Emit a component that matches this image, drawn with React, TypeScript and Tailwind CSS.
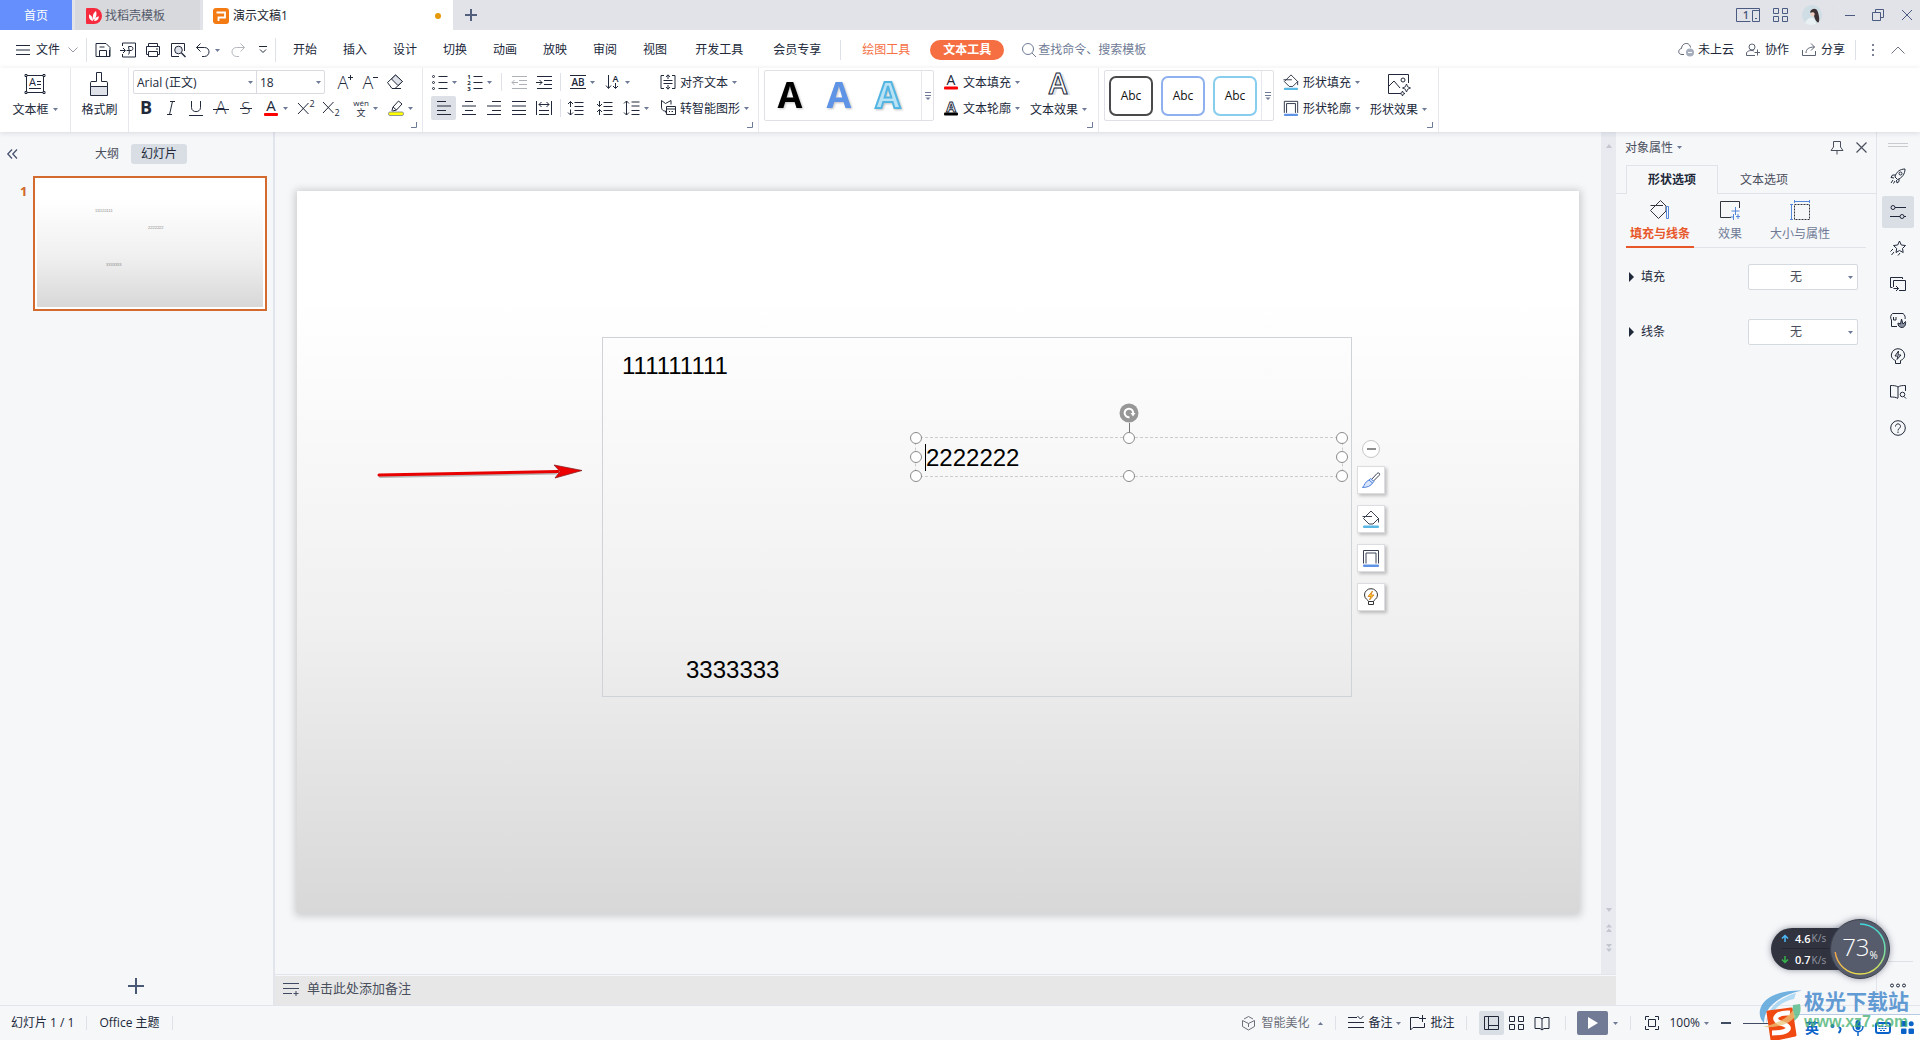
import React from "react";

const FONT = "font-['Open_Sans','Noto_Sans_CJK_SC',sans-serif]";

type IconProps = { w?: number; h?: number; className?: string; children: React.ReactNode };

function Icon({ w = 16, h = 16, className = "", children }: IconProps) {
  return (
    <svg
      width={w}
      height={h}
      viewBox={`0 0 ${w} ${h}`}
      fill="none"
      stroke="currentColor"
      strokeWidth="1"
      className={`shrink-0 overflow-visible ${className}`}
      aria-hidden="true"
    >
      {children}
    </svg>
  );
}

function Glyph({ x, y, size, weight = 400, family = "Open Sans", fill = "currentColor", children }: {
  x: number; y: number; size: number; weight?: number; family?: string; fill?: string; children: string;
}) {
  return (
    <text x={x} y={y} fontSize={size} fontWeight={weight} fontFamily={`${family}, 'Noto Sans CJK SC', sans-serif`} fill={fill} stroke="none" textAnchor="middle">
      {children}
    </text>
  );
}

const Caret = ({ up = false }: { up?: boolean }) => (
  <svg width="5" height="3" viewBox="0 0 5 3" className="shrink-0 fill-[#6f7b96]" aria-hidden="true">
    <path d={up ? "M0 3H5L2.5 0Z" : "M0 0H5L2.5 3Z"} />
  </svg>
);

const Sep = ({ className = "h-[18px]" }: { className?: string }) => <span className={`w-px shrink-0 bg-[#dfe1e8] ${className}`} />;

function Slot({ label, children, className = "w-[25px]" }: { label: string; children: React.ReactNode; className?: string }) {
  return (
    <button type="button" aria-label={label} className={`flex h-6 shrink-0 items-center justify-center ${className}`}>
      {children}
    </button>
  );
}

function DropSlot({ label, children }: { label: string; children: React.ReactNode }) {
  return (
    <button type="button" aria-label={label} className="flex h-6 w-[35px] shrink-0 items-center gap-1 pl-[5px]">
      {children}
      <Caret />
    </button>
  );
}

function LabelButton({ icon, children }: { icon: React.ReactNode; children: string }) {
  return (
    <button type="button" className="flex h-6 items-center gap-1 px-[5px] whitespace-nowrap">
      {icon}
      <span className="pt-0.5">{children}</span>
      <Caret />
    </button>
  );
}

function BigButton({ icon, children, drop = true }: { icon: React.ReactNode; children: string; drop?: boolean }) {
  return (
    <button type="button" className="flex h-[50px] flex-col items-center px-[5px]">
      <span className="flex h-[28px] w-full items-center justify-center">{icon}</span>
      <span className="flex h-[22px] items-center gap-1 pt-px whitespace-nowrap">
        {children}
        {drop && <Caret />}
      </span>
    </button>
  );
}

const Corner = () => (
  <Icon w={6} h={6} className="absolute right-[5px] bottom-1 text-[#6f7b96]">
    <path d="M5.5 0V5.5H0" />
  </Icon>
);

function Group({ children, corner = true, className = "" }: { children: React.ReactNode; corner?: boolean; className?: string }) {
  return (
    <div className={`relative flex shrink-0 border-r border-[#e6e8ee] pt-[2px] ${className}`}>
      {children}
      {corner && <Corner />}
    </div>
  );
}

/* ---------- icons ---------- */

const SaveIcon = () => (
  <Icon><path d="M1 1.5H11L15 5.5V14.5H1ZM4.5 14.5V8.5H11.5V14.5M4.5 5H9.5M14.5 8V14" strokeLinejoin="round" /></Icon>
);
const ExportIcon = () => (
  <Icon><path d="M2.5 4V1H15.5V15H2.5V12M0 8.5H5M3 6L5.5 8.5L3 11M8.5 12.5C10 11 9 8 8.5 4.5H11C13.5 4.5 13.5 8.5 11 8.5H6.5" /></Icon>
);
const PrintIcon = () => (
  <Icon><path d="M3.5 4.5V1.5H12.5V4.5M3.5 12.5H1.5V4.5H14.5V12.5H12.5M3.5 9.5H12.5V14.5H3.5ZM11 7H13" strokeLinejoin="round" /></Icon>
);
const PreviewIcon = () => (
  <Icon><path d="M14.5 9V1.5H1.5V14.5H9" /><circle cx="8.5" cy="8" r="3.8" fill="#dfe2e8" /><path d="M11.5 11L15.5 15" strokeWidth="1.5" /></Icon>
);
const UndoIcon = ({ flip = false }: { flip?: boolean }) => (
  <Icon className={flip ? "-scale-x-100" : ""}><path d="M5.5 1.5L1.5 5.5L5.5 9.5M1.5 5.5H9.5C15.5 5.5 15.5 14 9.5 14.5H7" /></Icon>
);
const TextBoxIcon = () => (
  <Icon w={24} h={22}>
    <path d="M3.5 2.5H20.5V19.5H3.5ZM14 8.5H18M14 11.5H18M6 15.5H18" />
    <path d="M2 1.5H4V3.5H2ZM20 1.5H22V3.5H20ZM2 18.5H4V20.5H2ZM20 18.5H22V20.5H20Z" fill="#fff" />
    <Glyph x={9.5} y={13} size={11}>A</Glyph>
  </Icon>
);
const PainterIcon = () => (
  <Icon w={20} h={26}><path d="M1.5 15.5H18.5V24.5H1.5Z" fill="#dfe2e8" /><path d="M1.5 15.5V11.5Q1.5 10.5 3 10.5H7.5V1.5H12.5V10.5H17Q18.5 10.5 18.5 11.5V15.5" /></Icon>
);
const EraserIcon = () => (
  <Icon><path d="M.5 8.5L8.5 1L15.5 7.5L8 14.5H5Z" strokeLinejoin="round" /><path d="M4.5 5L8.5 1L15.5 7.5L11 11.500Z" fill="#dfe2e8" /><path d="M5 14.5H14" /></Icon>
);
const BulletIcon = () => (
  <Icon><path d="M6.5 2.5H15.5M6.5 8.5H15.5M6.5 14.5H15.5" /><circle cx="1.5" cy="2.5" r="1" /><circle cx="1.5" cy="8.5" r="1" /><circle cx="1.5" cy="14.5" r="1" /></Icon>
);
const NumberIcon = () => (
  <Icon><path d="M6.5 2.5H15.5M6.5 8.5H15.5M6.5 14.5H15.5" /><Glyph x={2} y={5} size={6} weight={700}>1</Glyph><Glyph x={2} y={11} size={6} weight={700}>2</Glyph><Glyph x={2} y={17} size={6} weight={700}>3</Glyph></Icon>
);
const IndentIcon = ({ out = false }: { out?: boolean }) => (
  <Icon className={out ? "text-[#aeb1b8]" : ""}>
    <path d="M1 2.5H16M8 6.5H16M8 10.5H16M1 14.5H16" />
    <path d={out ? "M7 8.5H1M3.5 6L1 8.5L3.5 11" : "M0 8.5H6M3.5 6L6 8.5L3.5 11"} />
  </Icon>
);
const CaseIcon = () => <Icon><path d="M0 1.5H16M0 14.5H16" /><Glyph x={8} y={12} size={10} weight={600}>AB</Glyph></Icon>;
const DirectionIcon = () => <Icon><path d="M3.5 1V14M1 11.5L3.5 14.5L6 11.5M10.5 9V14M8 12L10.5 14.5L13 12" /><Glyph x={10.500} y={8} size={9} weight={600}>A</Glyph></Icon>;
const AlignIcon = ({ d }: { d: string }) => <Icon><path d={d} /></Icon>;
const DistributeIcon = () => <Icon><path d="M.5 1V15M15.5 1V15M3 10.5H13M3 14.5H13M3 4.5H13M5.5 2L3 4.5L5.5 7M10.5 2L13 4.5L10.5 7" /></Icon>;
const SpacingIcon = ({ kind }: { kind: "out" | "in" | "both" }) => (
  <Icon>
    <path d={kind === "both" ? "M7.5 2H15.5M7.5 6H15.5M7.5 10.5H15.5M7.5 14.5H15.5" : "M6.5 2.5H15.5M6.5 6.5H15.5M6.5 10.5H15.5M6.5 14.5H15.5"} />
    {kind === "out" && <path d="M2.5 7V1.5M0 4L2.5 1.5L5 4M2.5 9.5V15M0 12.5L2.5 15L5 12.5" />}
    {kind === "in" && <path d="M2.5 1V6.5M0 4L2.5 6.5L5 4M2.5 15V9.5M0 12L2.5 9.5L5 12" />}
    {kind === "both" && <path d="M2.5 1V15M0 3.5L2.5 1L5 3.5M0 12.5L2.5 15L5 12.5" />}
  </Icon>
);
const AlignTextIcon = () => <Icon><path d="M4 1.5H1V14.5H4M12 1.5H15V14.5H12M3.5 6.5H12.5M3.5 9.5H12.5M8 1V5M6 3L8 .8L10 3M8 11V15M6 13L8 15.2L10 13" /></Icon>;
const SmartIcon = () => <Icon><path d="M5.5 12.5V11C2 11 1.5 9 1.5 6V.5L5.5 3.5L11 .5V4.5M6.5 6.5H15.5V14.500H6.5ZM6.5 9H15.5M9 11.5H10M11.5 11.500H13" /></Icon>;
const TextColorIcon = ({ bar, outline = false }: { bar: string; outline?: boolean }) => (
  <Icon>
    {outline ? (
      <text x="8" y="11.5" fontSize="14" fontWeight="700" fontFamily="Open Sans" textAnchor="middle" fill="#fff" strokeWidth=".9">A</text>
    ) : (
      <Glyph x={8} y={11} size={14}>A</Glyph>
    )}
    <rect x="1" y="12.500" width="14" height="3" rx="1" fill={bar} stroke="none" />
  </Icon>
);
const HighlightIcon = () => <Icon><rect x=".5" y="12" width="15" height="3.5" rx="1.500" fill="#ff0" stroke="#77808f" strokeWidth=".8" /><path d="M4 10.5L5 7L10.5 1L14 4L8.5 10L4.5 11ZM5 7L8.5 10" strokeLinejoin="round" /></Icon>;
const BucketIcon = ({ size = 16 }: { size?: number }) => (
  <svg width={size} height={size} viewBox="0 0 18 18" fill="none" stroke="currentColor" className="shrink-0" aria-hidden="true">
    <path d="M7 14L1.500 8.500L9 1L16.500 8.500L11 14ZM.500 6.500H10M16.500 8V12.500" />
    <rect x="1" y="15.500" width="16" height="2.500" rx="1" fill="#5ab8e4" stroke="none" />
  </svg>
);
const FrameIcon = ({ size = 16 }: { size?: number }) => (
  <svg width={size} height={size} viewBox="0 0 18 18" fill="none" stroke="currentColor" className="shrink-0" aria-hidden="true">
    <path d="M1.500 14.500V1.500H16.500V14.500M4 14.500V4H14V14.500" />
    <rect x="1" y="15.500" width="16" height="2.500" rx="1" fill="#5f93e6" stroke="none" />
  </svg>
);
const TextEffectIcon = () => (
  <Icon w={26} h={26}>
    <text x="15" y="24" fontSize="28" fontWeight="600" fontFamily="Open Sans" textAnchor="middle" fill="#e3e5e9" stroke="none">A</text>
    <text x="12" y="23" fontSize="28" fontWeight="600" fontFamily="Open Sans" textAnchor="middle" fill="#fff">A</text>
  </Icon>
);
const ShapeEffectIcon = () => (
  <Icon w={24} h={24}><path d="M21.5 11V2.5H1.5V21.5H13M2 14L7 9L13 16" /><circle cx="16" cy="8" r="2" /><path d="M19.5 12L20.7 14.8L23.5 16L20.7 17.2L19.5 20L18.3 17.2L15.5 16L18.3 14.8ZM15.5 19L16.2 20.8L18 21.5L16.2 22.2L15.5 24L14.8 22.2L13 21.5L14.8 20.8Z" strokeWidth=".9" /></Icon>
);
const More = () => <Icon w={6} h={8} className="text-[#6f7b96]"><path d="M0 .5H6M0 3.5H6" /><path d="M.5 5.5H5.5L3 8Z" fill="currentColor" stroke="none" /></Icon>;

/* ---------- title bar ---------- */

function TitleBar() {
  return (
    <header className="flex h-[30px] shrink-0 items-stretch bg-[#e2e3e8]">
      <button type="button" className="w-[72px] bg-[#648ffc] pt-0.5 text-white">首页</button>
      <button type="button" className="ml-[3px] flex w-[125px] items-center gap-[3px] bg-[#d8d9dc] pt-0.5 pl-[11px] text-[#555b6b]">
        <Icon>
          <path d="M1 0H8A8 8 0 0 1 8 16H1Q0 16 0 15V1Q0 0 1 0Z" fill="#f62b3d" stroke="none" />
          <path d="M7 13C2.5 12 3 8 3 6.5C5 7 7 9 7 13ZM7.5 12C6 8 7.5 4.5 10 3C11 6 10.5 10 7.5 12ZM8 13C8.5 10.5 10.5 8.5 13 8.5C12.5 11.5 11 13 8 13Z" fill="#fff" stroke="none" />
        </Icon>
        找稻壳模板
      </button>
      <button type="button" className="ml-[3px] flex w-[250px] items-center gap-1 bg-white pt-0.5 pr-3 pl-[10px] text-[#20242e]">
        <Icon>
          <rect width="16" height="16" rx="3" fill="#f47a14" stroke="none" />
          <path d="M3.5 4.5H12V9.5H5.5V13" stroke="#fff" strokeWidth="1.800" />
        </Icon>
        <span>演示文稿1</span>
        <span className="ml-auto size-1.5 rounded-full bg-[#e59a0c]" />
      </button>
      <button type="button" aria-label="新建标签" className="flex w-9 items-center justify-center text-[#53607d]">
        <Icon w={12} h={12}><path d="M6 0V12M0 6H12" strokeWidth="2" /></Icon>
      </button>
      <div className="ml-auto flex items-center pr-2 text-[#4a5a80]">
        <button type="button" aria-label="窗口布局" className="flex w-[37px]">
          <Icon w={24} h={14}><path d="M14.5 13.5H.5V.5H23.5V13.5H16.5V2.5H23.5M19 10.5H21" /><Glyph x={10} y={11} size={11} weight={600}>1</Glyph></Icon>
        </button>
        <button type="button" aria-label="应用" className="flex w-[29px]">
          <Icon w={15} h={14}><path d="M.5 .5H5.5V5.5H.5ZM9.5 .5H14.5V5.5H9.5ZM.5 8.5H5.5V13.5H.5ZM9.5 8.5H14.5V13.5H9.5Z" /></Icon>
        </button>
        <button type="button" aria-label="账户" className="flex w-[30px]">
          <Icon w={20} h={20}>
            <circle cx="10" cy="10" r="10" fill="#cfdde4" stroke="none" />
            <path d="M8 7C10 3 14 3 15.500 6C17 10 18 15 16.500 17.500C14 17 13 14 12 11Z" fill="#3a3034" stroke="none" />
            <path d="M8.500 8.500C9.500 6.500 12 7 12.500 8.500C13 10 12 11.500 11 11.500C9.500 11.500 8.500 10 8.500 8.500Z" fill="#f0cfc2" stroke="none" />
            <path d="M3 17.500C5 14 8 12 11 13C13 15 14 17 14 19C10 20.5 6 20.5 3 17.500Z" fill="#e9f0f3" stroke="none" />
          </Icon>
        </button>
        <Sep className="h-5 bg-[#c6c9d2]" />
        <button type="button" aria-label="最小化" className="ml-3 flex w-[27px]"><Icon w={10} h={12}><path d="M0 6.5H10" /></Icon></button>
        <button type="button" aria-label="还原" className="flex w-[30px]"><Icon w={12} h={12}><path d="M3.5 3.5V.5H11.5V8.5H8.5M.5 3.5H8.5V11.5H.5Z" /></Icon></button>
        <button type="button" aria-label="关闭" className="flex"><Icon w={10} h={10}><path d="M0 0L10 10M10 0L0 10" /></Icon></button>
      </div>
    </header>
  );
}

/* ---------- menu row ---------- */

const TABS = ["开始", "插入", "设计", "切换", "动画", "放映", "审阅", "视图"];

function MenuRow() {
  return (
    <nav className="flex h-[38px] shrink-0 items-center bg-white pt-0.5">
      <button type="button" className="flex w-[86px] shrink-0 items-center gap-1.5 pl-4">
        <Icon w={14} h={10}><path d="M0 .5H14M0 5H14M0 9.5H14" /></Icon>
        <span className="shrink-0">文件</span>
        <Icon w={10} h={6} className="ml-0.5 text-[#9a9da6]"><path d="M.5 .5L5 5L9.5 .5" /></Icon>
      </button>
      <Sep className="mr-[3px] h-6" />
      <Slot label="保存"><SaveIcon /></Slot>
      <Slot label="输出为PDF"><ExportIcon /></Slot>
      <Slot label="打印"><PrintIcon /></Slot>
      <Slot label="打印预览"><PreviewIcon /></Slot>
      <DropSlot label="撤消"><UndoIcon /></DropSlot>
      <Slot label="恢复" className="w-[25px] text-[#b3b6bd]"><UndoIcon flip /></Slot>
      <Slot label="自定义快速访问工具栏"><Icon w={8} h={8}><path d="M0 .5H8M1 3.5L4 6.5L7 3.5" /></Icon></Slot>
      <Sep className="mr-1 h-6" />
      {TABS.map((t) => (
        <button key={t} type="button" className="shrink-0 px-[13px]">{t}</button>
      ))}
      <button type="button" className="shrink-0 px-[15px]">开发工具</button>
      <button type="button" className="shrink-0 px-[15px]">会员专享</button>
      <Sep className="mx-1 h-5" />
      <button type="button" className="ml-1 shrink-0 px-[13px] text-[#f56f43]">绘图工具</button>
      <button type="button" className="ml-[7px] h-5 shrink-0 rounded-full bg-[#f66f43] px-[13px] font-bold text-white">文本工具</button>
      <label className="ml-[18px] flex items-center gap-0.5 text-[#6f7b96]">
        <Icon w={14} h={14}><circle cx="6" cy="6" r="5.500" /><path d="M10 10L14 14" /></Icon>
        <input type="text" aria-label="查找命令、搜索模板" placeholder="查找命令、搜索模板" className="w-[130px] bg-transparent outline-none placeholder:text-[#6f7b96]" />
      </label>
      <div className="ml-auto flex shrink-0 items-center pr-[15px]">
        <button type="button" className="flex items-center gap-1">
          <Icon><path d="M6 12.5H4C-.5 12.5 0 7 3.5 6.5C4 0 12 0 12.5 5.5" stroke="#5b6272" /><circle cx="12" cy="10.5" r="4" fill="#a6adbd" stroke="none" /><path d="M10 10.5H14" stroke="#fff" /></Icon>
          未上云
        </button>
        <button type="button" className="ml-3 flex items-center gap-[5px]">
          <Icon w={14} h={14}><circle cx="6" cy="4" r="3" stroke="#5b6272" /><path d="M9 12.5H.5V10C1 7.5 6 7 8 8M8.5 9.5H14M11.5 6.5V12.5" stroke="#5b6272" /></Icon>
          协作
        </button>
        <button type="button" className="ml-[13px] flex items-center gap-[5px]">
          <Icon w={14} h={14}><path d="M.5 7V12.5H13.5V8M4 10C4 6 7 4 12.5 4M9 .5L12.5 4L9 7.5" stroke="#5b6272" /></Icon>
          分享
        </button>
        <Sep className="ml-[10px] h-5" />
        <button type="button" aria-label="更多" className="ml-4 flex text-[#7a8194]">
          <Icon w={3} h={12}><path d="M0 1H2M0 6H2M0 11H2" strokeWidth="2" /></Icon>
        </button>
        <button type="button" aria-label="折叠功能区" className="ml-4 flex text-[#6f7583]">
          <Icon w={14} h={8}><path d="M.5 7.5L7 1L13.5 7.5" /></Icon>
        </button>
      </div>
    </nav>
  );
}

/* ---------- ribbon ---------- */

const WORDART = [
  { fill: "#000000", stroke: "none" },
  { fill: "#5f93e6", stroke: "none" },
  { fill: "#b9e2f5", stroke: "#52b5e2" },
];
const SHAPES = ["border-[#4a4a4c]", "border-[#8fb0ee]", "border-[#86cdee]"];

function Gallery({ children }: { children: React.ReactNode }) {
  return (
    <div className="ml-[5px] flex h-[51px] w-[170px] rounded-[2px] border border-[#dfe1e6]">
      <div className="flex flex-1 items-center">{children}</div>
      <button type="button" aria-label="更多样式" className="flex w-3 items-center justify-center border-l border-[#e6e8ee]"><More /></button>
    </div>
  );
}

function Ribbon() {
  return (
    <section aria-label="文本工具" className="relative z-10 flex h-16 shrink-0 bg-white shadow-[0_1px_5px_rgba(60,70,90,0.16)]">
      <Group corner={false} className="w-[71px] justify-center">
        <BigButton icon={<TextBoxIcon />}>文本框</BigButton>
      </Group>
      <Group corner={false} className="w-[58px] justify-center">
        <BigButton icon={<PainterIcon />} drop={false}>格式刷</BigButton>
      </Group>

      <Group className="w-[294px] flex-col gap-0.5 pl-1">
        <div className="flex h-6 items-center">
          <div className="flex h-6 rounded-[2px] border border-[#d9dbe1]">
            <label className="relative flex w-[123px] items-center border-r border-[#d9dbe1]">
              <select aria-label="字体" className="h-full w-full appearance-none bg-transparent pt-px pl-[3px] outline-none"><option>Arial (正文)</option></select>
              <span className="pointer-events-none absolute right-[3px]"><Caret /></span>
            </label>
            <label className="relative flex w-[67px] items-center">
              <select aria-label="字号" className="h-full w-full appearance-none bg-transparent pt-px pl-[3px] outline-none"><option>18</option></select>
              <span className="pointer-events-none absolute right-[3px]"><Caret /></span>
            </label>
          </div>
          <span className="w-[7px]" />
          <Slot label="增大字号"><Icon><Glyph x={6} y={15} size={18} weight={300}>A</Glyph><path d="M11 3.5H16M13.5 1V6" /></Icon></Slot>
          <Slot label="减小字号"><Icon><Glyph x={6} y={15} size={18} weight={300}>A</Glyph><path d="M11 3.5H16" /></Icon></Slot>
          <Slot label="清除格式"><EraserIcon /></Slot>
        </div>
        <div className="flex h-6 items-center">
          <Slot label="加粗"><Icon><Glyph x={8} y={14} size={18} weight={700}>B</Glyph></Icon></Slot>
          <Slot label="倾斜"><Icon><path d="M7 1.5H12M4 14.5H9M9.5 1.5L6.5 14.5" /></Icon></Slot>
          <Slot label="下划线"><Icon><path d="M3.5 1V7.5C3.5 13 12.5 13 12.5 7.5V1M1 15.5H15" /></Icon></Slot>
          <Slot label="字符边框"><Icon><Glyph x={8} y={14} size={18} weight={300}>A</Glyph><path d="M0 9.5H16" /></Icon></Slot>
          <Slot label="删除线"><Icon><Glyph x={8} y={14} size={17} weight={300}>S</Glyph><path d="M2 8.5H14" /></Icon></Slot>
          <DropSlot label="字体颜色">
            <Icon><Glyph x={8} y={11} size={15}>A</Glyph><rect x="1" y="13" width="14" height="3" rx="1" fill="#fe0000" stroke="none" /></Icon>
          </DropSlot>
          <Slot label="上标"><Icon><path d="M0 3L10.5 14M10.5 3L0 14" /><Glyph x={14} y={7} size={9}>2</Glyph></Icon></Slot>
          <Slot label="下标"><Icon><path d="M0 2L10.5 13M10.5 2L0 13" /><Glyph x={14} y={16} size={9}>2</Glyph></Icon></Slot>
          <span className="w-[5px]" />
          <DropSlot label="拼音指南"><Icon><Glyph x={8} y={6} size={8}>wén</Glyph><Glyph x={8} y={15.5} size={9} family="Noto Sans CJK SC">文</Glyph></Icon></DropSlot>
          <DropSlot label="突出显示"><HighlightIcon /></DropSlot>
        </div>
      </Group>

      <Group className="w-[336px]">
        <div className="flex w-[232px] flex-col gap-0.5">
          <div className="flex h-6 items-center pl-1">
            <DropSlot label="项目符号"><BulletIcon /></DropSlot>
            <DropSlot label="编号"><NumberIcon /></DropSlot>
            <Sep className="mx-1 h-[18px]" />
            <Slot label="减少缩进"><IndentIcon out /></Slot>
            <Slot label="增加缩进"><IndentIcon /></Slot>
            <Sep className="mx-1 h-[18px]" />
            <DropSlot label="更改大小写"><CaseIcon /></DropSlot>
            <DropSlot label="文字方向"><DirectionIcon /></DropSlot>
          </div>
          <div className="flex h-6 items-center pl-2">
            <Slot label="左对齐" className="w-[25px] rounded-[2px] bg-[#dde1e7]"><AlignIcon d="M1 1.5H10M1 6H15M1 10.5H10M1 14.5H15" /></Slot>
            <Slot label="居中对齐"><AlignIcon d="M4 1.5H12M1 6H15M4 10.5H12M1 14.5H15" /></Slot>
            <Slot label="右对齐"><AlignIcon d="M6 1.5H15M1 6H15M6 10.5H15M1 14.5H15" /></Slot>
            <Slot label="两端对齐"><AlignIcon d="M1 1.5H15M1 6H15M1 10.5H15M1 14.5H15" /></Slot>
            <Slot label="分散对齐"><DistributeIcon /></Slot>
            <Sep className="ml-1 h-[18px]" />
            <Slot label="增大段落间距" className="w-[29px]"><SpacingIcon kind="out" /></Slot>
            <Slot label="减小段落间距" className="w-[29px]"><SpacingIcon kind="in" /></Slot>
            <DropSlot label="行距"><SpacingIcon kind="both" /></DropSlot>
          </div>
        </div>
        <div className="flex flex-col items-start gap-0.5">
          <LabelButton icon={<AlignTextIcon />}>对齐文本</LabelButton>
          <LabelButton icon={<SmartIcon />}>转智能图形</LabelButton>
        </div>
      </Group>

      <Group className="w-[340px]">
        <Gallery>
          {WORDART.map((a) => (
            <button key={a.fill} type="button" aria-label="艺术字样式" className="flex w-[49px] justify-center">
              <svg width="34" height="34" viewBox="0 0 34 34" className="overflow-visible drop-shadow-[1px_1px_1px_rgba(0,0,0,0.25)]" aria-hidden="true">
                <text x="17" y="29" fontSize="36" fontWeight="700" fontFamily="Open Sans" textAnchor="middle" fill={a.fill} stroke={a.stroke} strokeWidth="2">A</text>
              </svg>
            </button>
          ))}
        </Gallery>
        <div className="ml-1 flex flex-col items-start gap-0.5">
          <LabelButton icon={<TextColorIcon bar="#fe0000" />}>文本填充</LabelButton>
          <LabelButton icon={<TextColorIcon bar="#000" outline />}>文本轮廓</LabelButton>
        </div>
        <BigButton icon={<TextEffectIcon />}>文本效果</BigButton>
      </Group>

      <Group className="w-[340px]">
        <Gallery>
          <div className="flex gap-2 pl-1">
            {SHAPES.map((s) => (
              <button key={s} type="button" className={`h-10 w-11 rounded-[7px] border-2 bg-white text-[#111] ${s}`}>Abc</button>
            ))}
          </div>
        </Gallery>
        <div className="ml-1 flex flex-col items-start gap-0.5">
          <LabelButton icon={<BucketIcon />}>形状填充</LabelButton>
          <LabelButton icon={<FrameIcon />}>形状轮廓</LabelButton>
        </div>
        <BigButton icon={<ShapeEffectIcon />}>形状效果</BigButton>
      </Group>
    </section>
  );
}

/* ---------- slide list ---------- */

function SlidePanel() {
  return (
    <aside className="flex w-[275px] shrink-0 flex-col border-r-2 border-[#e3e5ed]">
      <div className="flex h-11 items-center pl-[7px]">
        <button type="button" aria-label="收起" className="flex w-[88px] text-[#4a5470]">
          <Icon w={11} h={10}><path d="M5 .5L.8 5L5 9.5M10 .5L5.8 5L10 9.5" strokeWidth="1.300" /></Icon>
        </button>
        <button type="button" className="text-[#4a4f5d]">大纲</button>
        <button type="button" className="ml-3 h-5 w-14 rounded-[3px] bg-[#d9dee5]">幻灯片</button>
      </div>
      <ol className="flex-1 pl-5">
        <li className="flex">
          <span className="w-[13px] pt-[7px] font-['Noto_Sans'] text-[13px] leading-4 font-bold text-[#d0662a]">1</span>
          <button type="button" aria-label="幻灯片 1" className="relative h-[135px] w-[234px] border-2 border-[#d36b2e] bg-white p-[2px]">
            <span className="relative block size-full bg-linear-to-b from-white from-15% via-[#f0f0f0] via-60% to-[#d8d8d8] text-left font-['Liberation_Sans'] text-[4px] leading-[4px] text-[#8a8a8a]">
              <span className="absolute top-[29px] left-[58px]">111111111</span>
              <span className="absolute top-[46px] left-[111px]">2222222</span>
              <span className="absolute top-[83px] left-[69px]">3333333</span>
            </span>
          </button>
        </li>
      </ol>
      <button type="button" aria-label="新建幻灯片" className="flex h-9 w-[271px] shrink-0 items-center justify-center pb-0.5 text-[#4a5878]">
        <Icon w={16} h={16}><path d="M8 0V16M0 8H16" strokeWidth="2" /></Icon>
      </button>
    </aside>
  );
}

/* ---------- canvas ---------- */

const HANDLES = [
  "top-0 left-0", "top-1/2 left-0", "top-full left-0", "top-0 left-1/2",
  "top-full left-1/2", "top-0 left-full", "top-1/2 left-full", "top-full left-full",
];

function FloatButton({ label, children }: { label: string; children: React.ReactNode }) {
  return (
    <button type="button" aria-label={label} className="flex size-7 items-center justify-center border border-[#dcdde0] bg-white text-[#3b4256] shadow-[2px_2px_3px_rgba(0,0,0,0.22)]">
      {children}
    </button>
  );
}

function Canvas() {
  return (
    <main className="flex min-w-0 flex-1 flex-col">
      <div className="flex min-h-0 flex-1 border-b border-[#e3e5ed]">
        <div className="flex min-w-0 flex-1 items-center px-[22px] pb-0.5">
          <div className="relative aspect-video w-full bg-linear-to-b from-white from-15% via-[#f0f0f0] via-60% to-[#d8d8d8] font-['Liberation_Sans'] text-[24px] leading-[27px] text-black shadow-[0_1px_8px_2px_rgba(0,0,0,0.18)]">
            <div className="absolute top-[146px] left-[305px] h-[360px] w-[750px] border border-[#cfd2d6]" />
            <p className="absolute top-[161px] left-[325px]">111111111</p>
            <p className="absolute top-[465px] left-[389px]">3333333</p>
            <svg className="absolute top-[270px] left-[79px]" width="212" height="22" viewBox="0 0 212 22" aria-hidden="true">
              <path d="M4 15.500L180 12" stroke="#777" strokeOpacity=".5" strokeWidth="3" strokeLinecap="round" />
              <path d="M3 14L182 10.5" stroke="#e80000" strokeWidth="3" strokeLinecap="round" />
              <path d="M178 4L206 9.5L179 17L184 10.5Z" fill="#ee0000" stroke="#8d2020" strokeWidth=".8" />
            </svg>
            <div className="absolute top-[246px] left-[618px] h-[40px] w-[428px] border border-dashed border-[#cbccce]">
              <p className="absolute top-[6px] left-[9px] border-l border-black">2222222</p>
              <span className="absolute bottom-full left-1/2 h-[15px] w-px bg-[#777]" />
              <span className="absolute -top-[25px] left-1/2 flex size-[19px] -translate-x-1/2 -translate-y-1/2 items-center justify-center rounded-full bg-[#979797] text-white">
                <Icon w={13} h={13}><path d="M7 10.8A4.3 4.3 0 1 1 10.7 7" strokeWidth="2" /><path d="M8 6.5H13L10.5 10Z" fill="currentColor" stroke="none" /></Icon>
              </span>
              {HANDLES.map((h) => (
                <span key={h} className={`absolute size-3 -translate-x-1/2 -translate-y-1/2 rounded-full border border-[#8b8b8b] bg-white ${h}`} />
              ))}
            </div>
            <div className="absolute top-[249px] left-[1060px] flex flex-col items-center gap-[11px]">
              <button type="button" aria-label="收起工具" className="-mb-[3px] flex size-[18px] items-center justify-center rounded-full border border-[#c6c7c9] bg-white">
                <span className="h-0.5 w-[9px] bg-[#8f8f8f]" />
              </button>
              <FloatButton label="格式刷">
                <Icon w={18} h={16}><path d="M9 8L15 1.5C17 0 18.5 2 17 3.5L11 9.5" /><path d="M7 8L8.5 6.5L12 9.5L10.5 11C9 14 5 15.5 .5 15.5C2.5 13.5 3 9.5 7 8ZM7 8L10.5 11" fill="#d8e4fa" stroke="#4f83dc" /></Icon>
              </FloatButton>
              <FloatButton label="形状填充"><BucketIcon size={18} /></FloatButton>
              <FloatButton label="形状轮廓"><FrameIcon size={18} /></FloatButton>
              <FloatButton label="智能推荐">
                <Icon w={14} h={18}><path d="M4.5 13.5C4.5 12 .5 11 .5 7A6.5 6.3 0 0 1 13.5 7C13.5 11 9.5 12 9.5 13.5M4.5 13.5H9.5V16.5H4.5Z" stroke="#333" /><path d="M8.5 3L4 8.5H7L5.5 12L10 7H7Z" fill="#fdd02c" stroke="#dd8d2a" /></Icon>
              </FloatButton>
            </div>
          </div>
        </div>
        <div className="flex w-[15px] shrink-0 flex-col items-center bg-[#e8eaf0] pt-3 text-[#c3c6ce]">
          <Icon w={6} h={4}><path d="M0 4H6L3 0Z" fill="currentColor" stroke="none" /></Icon>
          <div className="mt-auto flex flex-col items-center gap-3 pb-[22px]">
            <Icon w={6} h={4}><path d="M0 0H6L3 4Z" fill="currentColor" stroke="none" /></Icon>
            <Icon w={6} h={8}><path d="M0 3.500L3 0L6 3.500ZM0 8L3 4.500L6 8Z" fill="currentColor" stroke="none" /></Icon>
            <Icon w={6} h={8}><path d="M0 0L3 3.500L6 0ZM0 4.500L3 8L6 4.500Z" fill="currentColor" stroke="none" /></Icon>
          </div>
        </div>
      </div>
      <label className="flex h-[30px] shrink-0 items-center gap-2 border-t border-[#f6f7f9] bg-[#e7e7e7] pb-1.5 pl-2 text-[13px] text-[#4a4f5d]">
        <Icon><path d="M0 3.5H16M0 8.5H16M0 13.5H9M13 11V16M10.5 13.5H15.5" stroke="#3f4a63" /></Icon>
        <input type="text" aria-label="备注" placeholder="单击此处添加备注" className="flex-1 bg-transparent outline-none placeholder:text-[#4a4f5d]" />
      </label>
    </main>
  );
}

/* ---------- properties ---------- */

function PropRow({ label }: { label: string }) {
  return (
    <div className="flex h-[26px] items-center pr-[18px] pl-[13px]">
      <button type="button" className="flex items-center gap-[7px]">
        <svg width="5" height="10" viewBox="0 0 5 10" className="fill-[#20293a]" aria-hidden="true"><path d="M0 0L5 5L0 10Z" /></svg>
        {label}
      </button>
      <span className="relative ml-auto flex h-[26px] w-[110px] items-center">
        <select aria-label={label} className="size-full appearance-none rounded-[2px] border border-[#d5d9e0] bg-white pl-[41px] text-[#4a4f5d] outline-none"><option>无</option></select>
        <span className="pointer-events-none absolute right-[5px]"><Caret /></span>
      </span>
    </div>
  );
}

function PropertiesPanel() {
  return (
    <aside className="flex w-[261px] shrink-0 flex-col border-r border-[#e3e5ed]">
      <div className="flex h-[33px] items-center pr-[9px] pb-0.5 pl-[9px] text-[#4a4f5d]">
        <button type="button" className="flex items-center gap-1">对象属性<Caret /></button>
        <button type="button" aria-label="固定" className="ml-auto flex"><Icon w={14} h={14}><path d="M3.5 .5H10.5V6L13 9.5H1L3.5 6ZM7 9.5V13.5" /></Icon></button>
        <button type="button" aria-label="关闭面板" className="ml-3 flex"><Icon w={11} h={11}><path d="M.5 .5L10.5 10.5M10.5 .5L.5 10.5" strokeWidth="1.200" /></Icon></button>
      </div>
      <div className="flex h-[29px]">
        <span className="w-[10px] border-b border-[#e0e3e9]" />
        <button type="button" className="w-[92px] border border-b-0 border-[#e0e3e9] font-bold">形状选项</button>
        <button type="button" className="w-[92px] border-b border-[#e0e3e9] pt-0.5 text-[#4a4f5d]">文本选项</button>
        <span className="flex-1 border-b border-[#e0e3e9]" />
      </div>
      <div className="mr-[10px] ml-[10px] flex h-[54px] border-b border-[#e0e3e9] text-[#6f7b96]">
        <button type="button" className="-mb-px flex w-[68px] flex-col items-center justify-between border-b-2 border-[#e8572a] pt-1.5 pb-[3px] font-bold text-[#e8572a]">
          <Icon w={20} h={20} className="text-[#30343c]"><path d="M.5 10.5L10.5 .5L16 6V11L8.5 18.5ZM.5 5.5H13" /><path d="M16.5 6.5H18.5V18.5H16.5Z" stroke="#5387da" /></Icon>
          填充与线条
        </button>
        <button type="button" className="flex w-[72px] flex-col items-center justify-between pt-1.5 pb-1">
          <Icon w={20} h={20} className="text-[#30343c]"><path d="M11 17.5H.5V1.5H19.5V8" /><path d="M15.5 7V15M11.5 11H19.5M13.5 14V20M10.5 17H14M18 14V19M16 16.5H20" stroke="#5387da" /></Icon>
          效果
        </button>
        <button type="button" className="flex w-[68px] flex-col items-center justify-between pt-1.5 pb-1">
          <Icon w={20} h={20} className="text-[#30343c]"><path d="M4.5 4.5H19.5V19.5H4.5Z" strokeDasharray="2 1" /><path d="M4.5 1.5H19.5M4.5 0V3M19.5 0V3M1.5 4.5V19.5M0 4.5H3M0 19.5H3" stroke="#5387da" /></Icon>
          <span className="whitespace-nowrap">大小与属性</span>
        </button>
      </div>
      <div className="mt-4 flex flex-col gap-[29px]">
        <PropRow label="填充" />
        <PropRow label="线条" />
      </div>
    </aside>
  );
}

const SIDE = [
  { label: "推荐", icon: <Icon><path d="M5 9C6 4 10 1 15 1C15 6 12 10 7.5 11.5ZM5.5 7H2.5L1 9.5L4 10M9 11V13.5L7 15L6.5 12M3 12L1 15M5 13L3.5 15.5" strokeLinejoin="round" /><circle cx="10.5" cy="5.5" r="1.500" /></Icon> },
  { label: "对象属性", icon: <Icon><circle cx="3" cy="3.500" r="2" /><path d="M5 3.500H16M0 12.500H10M14 12.500H16" /><circle cx="12" cy="12.500" r="2" /></Icon> },
  { label: "动画", icon: <Icon><path d="M9.5 1L11.3 5L15.5 5.5L12.5 8.5L13.2 12.5L9.5 10.5L6 12.5L6.7 8.5L3.5 5.5L7.7 5ZM3 9L.5 11.5M4 12L1.5 15M10 13L8 15.5" strokeLinejoin="round" /></Icon> },
  { label: "切换", icon: <Icon><path d="M2.500 11.5H.5V1.5H12.5V3M9 14.5H15.5V4.5H3.5V11M3.500 12.5H8.500M6 10L8.5 12.5L6 15" /></Icon> },
  { label: "模板", icon: <Icon><path d="M7 14.5H1.5V8M1.5 8C0 6 .5 3 2.5 1.5H13C15 3 15.5 5 15 7M3.5 5V8H6V5" /><path d="M8 11C7.5 14 10 15.5 12 15.5C14.5 15.5 16 13 15.5 9.5L13 12L11.5 7L10.5 12Z" fill="#8b91a0" /></Icon> },
  { label: "智能", icon: <Icon><path d="M5.5 12.5C2 11 1 9 1.5 6C3 -1 13 -1 14.5 6C15 9 14 11 10.5 12.5V15.5H5.5Z" /><path d="M8.5 3L5 8H8L7 11.5L11 7H8Z" /></Icon> },
  { label: "知识库", icon: <Icon><path d="M8 14V3C6 1.5 3 1.5 .5 1.5V13C3 13 6 13 8 14.5M8 3C10 1.5 13 1.5 15.5 1.5V7" /><circle cx="12.5" cy="10.5" r="2.300" /><path d="M14 12.5L16 14.5" /></Icon> },
  { label: "帮助", icon: <Icon><circle cx="8" cy="8" r="7.300" /><path d="M5.5 6.5C5.5 3 10.5 3 10.5 6.5C10.5 8.5 8 8 8 10.5M8 11.5V13" /></Icon> },
];

function SideBar() {
  return (
    <aside className="flex w-[43px] shrink-0 flex-col items-center pt-[11px] pr-0.5">
      <Icon w={20} h={5} className="text-[#c9cbd1]"><path d="M0 .5H20M0 3.5H20" /></Icon>
      <div className="mt-3 flex flex-col gap-1">
        {SIDE.map((s) => (
          <button key={s.label} type="button" aria-label={s.label} className={`flex size-8 items-center justify-center rounded-[2px] ${s.label === "对象属性" ? "bg-[#dadfe6]" : ""}`}>
            {s.icon}
          </button>
        ))}
      </div>
      <div className="mt-auto flex h-[44px] w-[30px] items-center justify-center border-t border-[#dfe1e8] pt-1">
        <Icon w={16} h={5}><circle cx="2" cy="2.5" r="1.500" /><circle cx="8" cy="2.5" r="1.500" /><circle cx="14" cy="2.5" r="1.500" /></Icon>
      </div>
    </aside>
  );
}

/* ---------- status bar ---------- */

function StatusBar() {
  return (
    <footer className="flex h-[35px] shrink-0 items-center border-t border-[#e3e5ed]">
      <span className="pl-[11px]">幻灯片 1 / 1</span>
      <Sep className="mx-3 h-3.5" />
      <span>Office 主题</span>
      <Sep className="mx-3 h-3.5" />
      <div className="ml-auto flex items-center">
        <button type="button" className="flex items-center gap-[5px] text-[#6b6f79]">
          <Icon w={15}><path d="M3 4L7.5 1.5L12 4M1.5 5.5V11.5L7.5 15L13.5 11.5V5.5M1.5 5.5L7.5 8.5L13.5 5.5M7.5 8.5V12" /></Icon>
          智能美化
          <span className="ml-1 flex"><Caret up /></span>
        </button>
        <Sep className="mx-3 h-3.5" />
        <button type="button" className="flex items-center gap-1">
          <Icon w={16}><path d="M0 2.5H9M0 7.5H16M0 12.5H16M9.5 1L12.5 4L15.5 1" /></Icon>
          <span>备注</span>
          <Caret />
        </button>
        <button type="button" className="ml-[9px] flex items-center gap-1">
          <Icon w={16}><path d="M9 2.5H.5V15L3 12.5H14.5V8M12.5 0V7M9 3.5H16" /></Icon>
          批注
        </button>
        <Sep className="mx-3 h-3.5" />
        <Slot label="普通视图" className="w-[25px] rounded-[2px] bg-[#dadfe6]"><Icon w={15} h={14}><path d="M.5 .5H14.5V13.5H.5ZM4.5 .5V13.5M4.5 9.5H14.5" /></Icon></Slot>
        <Slot label="幻灯片浏览"><Icon w={15} h={14}><path d="M.5 .5H5.5V5.5H.5ZM9.5 .5H14.5V5.5H9.5ZM.5 8.5H5.5V13.5H.5ZM9.5 8.5H14.5V13.5H9.5Z" /></Icon></Slot>
        <Slot label="阅读视图"><Icon w={16} h={15}><path d="M8 14L6 12.5H1V1.5H6L8 3L10 1.5H15V12.5H10ZM8 3V14" /></Icon></Slot>
        <Sep className="mx-[11px] h-3.5" />
        <button type="button" aria-label="放映" className="flex h-6 w-[31px] items-center justify-center rounded-[2px] bg-[#717b96]"><svg width="10" height="12" viewBox="0 0 10 12" className="fill-white" aria-hidden="true"><path d="M0 0L10 6L0 12Z" /></svg></button>
        <button type="button" aria-label="放映选项" className="ml-[5px] flex"><Caret /></button>
        <Sep className="mr-[14px] ml-3 h-3.5" />
        <button type="button" aria-label="适应窗口" className="flex"><Icon w={14} h={14}><path d="M.5 4V.5H4M10 .5H13.5V4M13.5 10V13.5H10M4 13.5H.5V10M3.5 3.5H10.5V10.5H3.5Z" /></Icon></button>
        <button type="button" className="ml-[10px] flex items-center gap-1">100%<Caret /></button>
        <button type="button" aria-label="缩小" className="mr-3 ml-3 h-0.5 w-[10px] bg-[#3f4a63]" />
        <input type="range" aria-label="缩放" className="h-px w-[177px] appearance-none bg-[#3f4a63]" />
      </div>
    </footer>
  );
}

/* ---------- desktop overlays ---------- */

function SpeedMeter() {
  return (
    <div className="absolute right-[30px] bottom-[61px] z-20 flex h-[60px] w-[119px] items-center">
      <div className="flex h-[42px] w-[90px] flex-col rounded-l-full bg-[#31343f] pl-[10px] text-[11px] leading-none font-semibold text-white shadow-[0_0_6px_rgba(50,55,80,0.5)]">
        <span className="flex h-[21px] items-center border-b border-[#262932]">
          <Icon w={8} h={8} className="mr-[6px] text-[#4db7f5]"><path d="M4 8V1.5M1 4.5L4 1.5L7 4.5" strokeWidth="1.500" /></Icon>
          4.6<span className="ml-px text-[10px] font-normal text-[#9297a3]">K/s</span>
        </span>
        <span className="flex h-[21px] items-center">
          <Icon w={8} h={8} className="mr-[6px] text-[#35b14a]"><path d="M4 0V6.5M1 3.5L4 6.5L7 3.5" strokeWidth="1.500" /></Icon>
          0.7<span className="ml-px text-[10px] font-normal text-[#9297a3]">K/s</span>
        </span>
      </div>
      <div className="absolute right-0 flex size-[60px] items-center justify-center rounded-full border border-[#3d414d] bg-[#565c6b] shadow-[0_0_6px_rgba(50,55,80,0.5)]">
        <svg width="58" height="58" viewBox="0 0 58 58" fill="none" strokeWidth="1.500" className="absolute" aria-hidden="true">
          <defs>
            <linearGradient id="arcRight" x1="0" y1="0" x2="0" y2="1"><stop stopColor="#3fd8dc" /><stop offset=".6" stopColor="#7fe09a" /><stop offset="1" stopColor="#e8e04e" /></linearGradient>
            <linearGradient id="arcLeft" x1="1" y1="1" x2="0" y2="0"><stop stopColor="#e8e04e" /><stop offset="1" stopColor="#f2a24a" /></linearGradient>
          </defs>
          <path d="M29 4A25 25 0 0 1 29 54" stroke="url(#arcRight)" />
          <path d="M29 54A25 25 0 0 1 4.2 32" stroke="url(#arcLeft)" />
        </svg>
        <span className="pb-1 text-[24px] leading-none font-light text-white">73</span>
        <span className="self-end pb-[18px] text-[10px] leading-none text-white">%</span>
      </div>
    </div>
  );
}

function InputMethodBar() {
  return (
    <div className="absolute right-0 bottom-0 z-20 flex h-[26px] w-[142px] items-center justify-between border border-r-0 border-b-0 border-[#b9cbe4] bg-white pr-[6px] pl-[26px] text-[#0b63c9]">
      <span className="text-[14px] leading-none font-bold">英</span>
      <Icon w={12} h={12}><circle cx="2.5" cy="4" r="2" fill="currentColor" stroke="none" /><path d="M8.5 5.5C11.5 5 11 9 8.5 11" strokeWidth="2" /></Icon>
      <Icon w={12} h={16}><rect x="3.5" y="0" width="5" height="10" rx="2.500" fill="currentColor" stroke="none" /><path d="M1 6C1 13.5 11 13.5 11 6M6 12V16" strokeWidth="1.500" /></Icon>
      <Icon w={16} h={12}><rect x="1" y="1" width="14" height="10" rx="2" strokeWidth="2" /><path d="M3.5 4.5H12.5M3.5 6.5H12.5M5 8.5H11" strokeDasharray="2 1" /></Icon>
      <Icon w={13} h={13}><rect width="5.5" height="5.5" rx="1" fill="currentColor" stroke="none" /><rect y="7.5" width="5.5" height="5.5" rx="1" fill="currentColor" stroke="none" /><rect x="7.5" y="7.5" width="5.5" height="5.5" rx="1" fill="currentColor" stroke="none" /><circle cx="10.2" cy="2.8" r="2.500" fill="currentColor" stroke="none" /></Icon>
    </div>
  );
}

function SiteMark() {
  return (
    <div className="pointer-events-none absolute right-[11px] bottom-0 z-30 flex h-[50px] items-start gap-0.5">
      <svg width="43" height="50" viewBox="0 0 43 50" fill="none" aria-hidden="true">
        <path d="M43 .5C21 0 4 7 1 20C0 26 2 30 5 33C5 18 18 6 43 .5Z" fill="#58a5dc" fillOpacity=".85" />
        <path d="M37 3C18 9 8 19 7 33C14 19 23 11 35 9Z" fill="#9fd2f1" fillOpacity=".8" />
        <path d="M41 14C44 26 36 36 14 36C26 33 33 27 34 15Z" fill="#5cbd8c" fillOpacity=".85" />
        <path d="M9 22L32 19L36 45L13 50Z" fill="#f04a12" strokeLinejoin="round" stroke="#f04a12" strokeWidth="3" />
        <path d="M31 23C18 22 12 29 21 33C34 36 32 43 13 43" stroke="#fff" strokeWidth="5" />
        <path d="M4 37C16 34 27 30 34 20L36 27C30 34 20 38 4 37Z" fill="#e9c77b" fillOpacity=".75" />
      </svg>
      <div className="font-['Noto_Sans_CJK_SC']">
        <p className="text-[21px] leading-[20px] font-bold text-[#629bd3]">极光下载站</p>
        <p className="font-['Liberation_Sans'] text-[16px] leading-[24px] font-bold text-[#3fae6b]/75">www.xz7.com</p>
      </div>
    </div>
  );
}

export default function App() {
  return (
    <div className={`relative flex h-screen flex-col overflow-hidden bg-[#f6f7f9] text-[12px] leading-[18px] text-[#20283a] ${FONT}`}>
      <TitleBar />
      <MenuRow />
      <Ribbon />
      <div className="flex min-h-0 flex-1">
        <SlidePanel />
        <Canvas />
        <PropertiesPanel />
        <SideBar />
      </div>
      <StatusBar />
      <SpeedMeter />
      <InputMethodBar />
      <SiteMark />
    </div>
  );
}
